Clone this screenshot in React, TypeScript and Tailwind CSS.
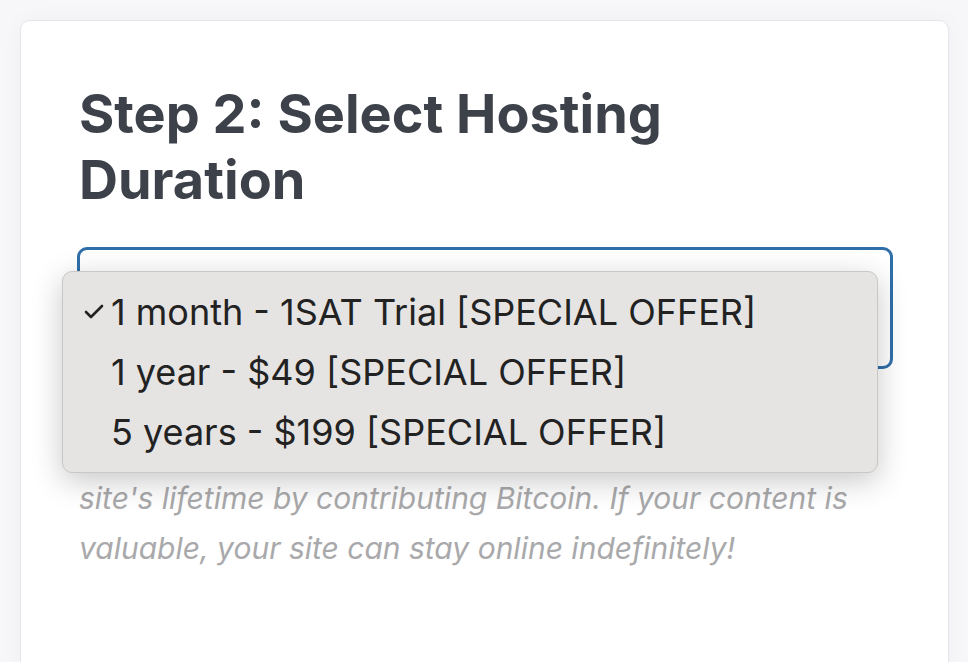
import { Check } from 'lucide-react';

const options = [
  { label: '1 month - 1SAT Trial [SPECIAL OFFER]', selected: true },
  { label: '1 year - $49 [SPECIAL OFFER]', selected: false },
  { label: '5 years - $199 [SPECIAL OFFER]', selected: false },
];

export default function App() {
  return (
    <div className="min-h-[662px] bg-[#f7f7f9] pl-5 pr-[19px] pt-5 font-['Inter',sans-serif]">
      <div className="h-[660px] rounded-t-[10px] border border-[#e5e4ea] bg-white px-[58px] pt-[60px] shadow-[0_0_24px_rgba(0,0,0,0.03)]">
        <h2 className="text-[54px] font-bold leading-[66px] text-[#3d414a]">
          Step 2: Select Hosting
          <br />
          Duration
        </h2>

        <div className="relative mt-[34px]">
          <div className="ml-[-2px] mr-[-3px] h-[122px] rounded-[10px] border-[3px] border-[#2f6fa9] bg-white" />

          <div className="absolute left-[-17px] top-[24px] w-[816px] rounded-[10px] border border-[#c9c8c7] bg-[#e5e4e3] py-[10px] shadow-[0_8px_30px_rgba(0,0,0,0.22)]">
            {options.map((o) => (
              <div key={o.label} className="flex h-[60px] items-center text-[36px] text-[#222]">
                <span className="flex w-[48px] justify-end pr-[5px]">
                  {o.selected && <Check className="h-[24px] w-[24px]" strokeWidth={2.6} />}
                </span>
                <span>{o.label}</span>
              </div>
            ))}
          </div>
        </div>

        <p className="mt-[104px] text-[30px] italic leading-[50px] text-[#a9a9ab]">
          site's lifetime by contributing Bitcoin. If your content is
          <br />
          valuable, your site can stay online indefinitely!
        </p>
      </div>
    </div>
  );
}
